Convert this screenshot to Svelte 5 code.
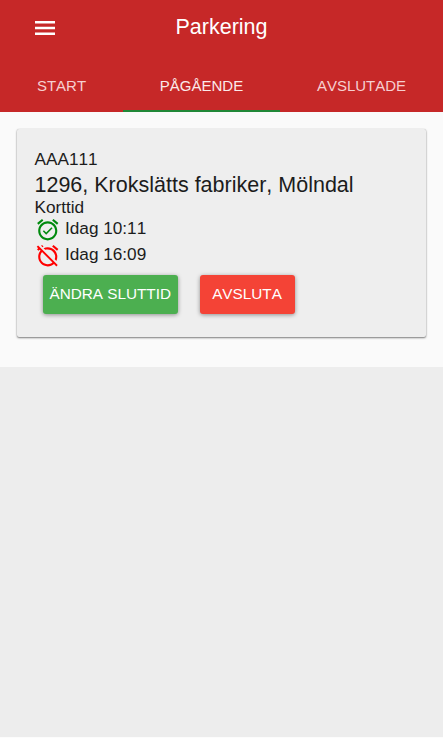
<script lang="ts">
  const tabs = ["START", "PÅGÅENDE", "AVSLUTADE"];
  let active = $state(1);
</script>

<div class="app">
  <header>
    <div class="toolbar">
      <button class="menu" aria-label="Meny">
        <svg viewBox="0 0 20 14" width="20" height="14">
          <path d="M0 0h20v2.4H0zM0 5.8h20v2.4H0zM0 11.6h20V14H0z" fill="#fff" />
        </svg>
      </button>
      <h1>Parkering</h1>
    </div>
    <nav>
      {#each tabs as tab, i}
        <button class="tab" class:active={active === i} onclick={() => (active = i)}>
          {tab}
        </button>
      {/each}
    </nav>
  </header>

  <main>
    <section class="card">
      <div class="plate">AAA111</div>
      <h2>1296, Krokslätts fabriker, Mölndal</h2>
      <div class="type">Korttid</div>
      <div class="time start">
        <svg viewBox="0 0 24 24" width="25.5" height="25.5">
          <path
            d="M22 5.72l-4.6-3.86-1.29 1.53 4.6 3.86L22 5.72zM7.88 3.39L6.6 1.86 2 5.71l1.29 1.53 4.59-3.85zM12 4c-4.97 0-9 4.03-9 9s4.02 9 9 9c4.97 0 9-4.03 9-9s-4.03-9-9-9zm0 16c-3.87 0-7-3.13-7-7s3.13-7 7-7 7 3.13 7 7-3.13 7-7 7zm-1.46-5.47L8.41 12.4l-1.06 1.06 3.18 3.18 6-6-1.06-1.06-4.93 4.95z"
          />
        </svg>
        <span>Idag 10:11</span>
      </div>
      <div class="time end">
        <svg viewBox="0 0 24 24" width="25.5" height="25.5">
          <path
            d="M12 6c3.87 0 7 3.13 7 7 0 .84-.16 1.65-.43 2.4l1.52 1.52c.58-1.19.91-2.51.91-3.92 0-4.97-4.03-9-9-9-1.41 0-2.73.33-3.92.91L9.6 6.43C10.35 6.16 11.16 6 12 6zm10-.28l-4.6-3.86-1.29 1.53 4.6 3.86L22 5.72zM2.92 2.29L1.65 3.57 2.98 4.9l-1.11.93 1.42 1.42 1.11-.94.8.8C3.83 8.69 3 10.75 3 13c0 4.97 4.02 9 9 9 2.25 0 4.31-.83 5.89-2.2l2.2 2.2 1.27-1.27L3.89 3.27l-.97-.98zm13.55 16.1C15.26 19.39 13.7 20 12 20c-3.87 0-7-3.13-7-7 0-1.7.61-3.26 1.61-4.47l9.86 9.86zM8.02 3.28L6.6 1.86l-.86.71 1.42 1.42.86-.71z"
          />
        </svg>
        <span>Idag 16:09</span>
      </div>
      <div class="actions">
        <button class="btn change">ÄNDRA SLUTTID</button>
        <button class="btn stop">AVSLUTA</button>
      </div>
    </section>
  </main>
</div>

<style>
  :global(body) {
    background: #ededed;
  }

  .app {
    box-sizing: border-box;
    height: 738px;
    border-bottom: 1px solid #fcfcfc;
    background: #ededed;
    color: #1c1c1c;
    font-family: "Liberation Sans", Arial, sans-serif;
    font-size: 17.2px;
    font-kerning: none;
  }

  button {
    padding: 0;
    border: none;
    background: none;
    color: inherit;
    font: inherit;
    font-kerning: none;
    cursor: pointer;
  }

  h1,
  h2 {
    margin: 0;
    font-weight: 400;
  }

  /* Header */
  header {
    height: 112px;
    background: #c62828;
    color: #fff;
  }

  .toolbar {
    display: flex;
    align-items: center;
    height: 56px;
  }

  .menu {
    width: 20px;
    height: 14px;
    margin-left: 35px;
    line-height: 0;
  }

  h1 {
    margin: 0 0 2px 120.5px;
    font-size: 21.5px;
    line-height: 26px;
  }

  nav {
    display: grid;
    grid-template-columns: 123px 157px 163px;
    height: 56px;
  }

  .tab {
    padding-top: 4px;
    border-bottom: 2px solid transparent;
    color: #f6cfd0;
    font-size: 15px;
  }

  .tab.active {
    border-bottom-color: #218838;
    color: #fbeaea;
  }

  /* Content */
  main {
    box-sizing: border-box;
    height: 255px;
    padding: 17px 17px 30px;
    background: #fafafa;
  }

  .card {
    box-sizing: border-box;
    height: 208px;
    padding: 19px 18px 0 17.5px;
    border-radius: 2px;
    background: #eee;
    box-shadow:
      0 1px 2px rgba(0, 0, 0, 0.5),
      0 0 1px rgba(0, 0, 0, 0.2);
  }

  .plate {
    line-height: 22px;
  }

  h2 {
    padding-top: 1px;
    font-size: 21.5px;
    line-height: 28px;
  }

  .type {
    line-height: 17px;
  }

  .time {
    display: flex;
    align-items: flex-start;
    gap: 5px;
    height: 26px;
    line-height: 24px;
  }

  .time svg {
    flex: none;
    margin-top: 0.5px;
  }

  .start svg {
    fill: #008a0e;
  }

  .end svg {
    fill: #f00;
  }

  .actions {
    display: flex;
    gap: 22px;
    padding: 7px 0 0 8.5px;
  }

  .btn {
    width: 134.5px;
    height: 39px;
    padding-bottom: 1px;
    border-radius: 3px;
    box-shadow: 0 1px 4px rgba(0, 0, 0, 0.4);
    color: #fff;
    font-size: 15.3px;
    white-space: nowrap;
  }

  .change {
    background: #4caf50;
  }

  .stop {
    width: 95px;
    background: #f44336;
  }
</style>
